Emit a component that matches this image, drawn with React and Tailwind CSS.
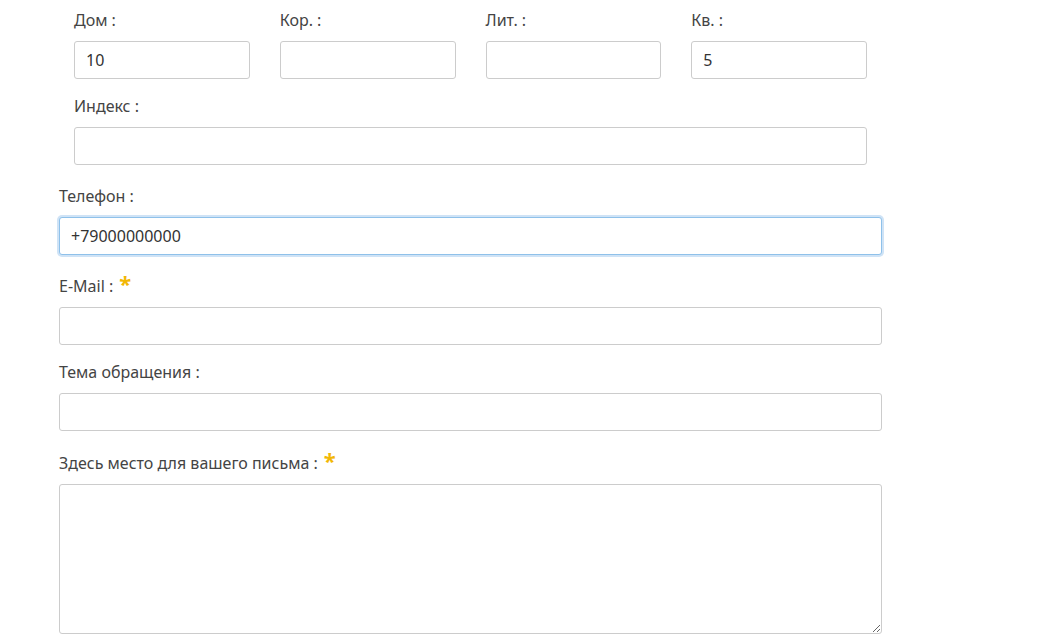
export default function App() {
  const font = { fontFamily: '"Noto Sans", "Open Sans", sans-serif' };
  const lbl = "block h-[20px] leading-[20px] text-[16px] text-[#444] mb-[8px] relative -top-[3px]";
  const inp = "block w-full h-[38px] border border-[#ccc] rounded-[3px] bg-white px-[11px] text-[16px] text-[#333] outline-none";
  const Star = () => <span className="text-[#f2b705] text-[22px] font-bold leading-[10px] align-top ml-[6px] relative top-[2px]">*</span>;
  return (
    <div className="w-[1060px] h-[641px] bg-white overflow-hidden" style={font}>
      <div className="ml-[59px] w-[823px] pt-[13px]">
        <div className="px-[15px]">
          <div className="grid grid-cols-4 gap-x-[30px]">
            {[["Дом :", "10"], ["Кор. :", ""], ["Лит. :", ""], ["Кв. :", "5"]].map(([l, v]) => (
              <div key={l}>
                <label className={lbl}>{l}</label>
                <input className={inp} defaultValue={v} />
              </div>
            ))}
          </div>
          <div className="mt-[20px]">
            <label className={lbl}>Индекс :</label>
            <input className={inp} />
          </div>
        </div>
        <div className="mt-[24px]">
          <label className={lbl}>Телефон :</label>
          <input className={inp + " !border-[#8fc1ea] shadow-[0_0_0_2px_#cfe3f6]"} defaultValue="+79000000000" />
        </div>
        <div className="mt-[24px]">
          <label className={lbl}>E-Mail :<Star /></label>
          <input className={inp} />
        </div>
        <div className="mt-[20px]">
          <label className={lbl}>Тема обращения :</label>
          <input className={inp} />
        </div>
        <div className="mt-[25px]">
          <label className={lbl}>Здесь место для вашего письма :<Star /></label>
          <textarea className={inp + " !h-[150px] resize-y"} />
        </div>
      </div>
    </div>
  );
}
